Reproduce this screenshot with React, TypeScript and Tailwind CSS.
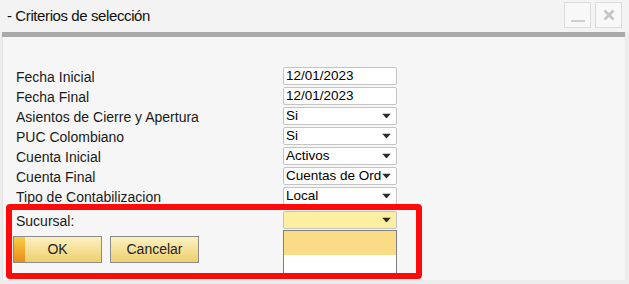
import React from 'react';

const font = { fontFamily: '"Liberation Sans", Arial, sans-serif' };

function Arrow() {
    return (
        <svg width="9" height="5" viewBox="0 0 9 5" className="absolute right-[5px] top-1/2 -translate-y-1/2">
            <path d="M0 0 H9 L4.5 5 Z" fill="#2b2b2b" />
        </svg>
    );
}

function Field({ value, select, active }: { value: string; select?: boolean; active?: boolean }) {
    return (
        <div
            className={`relative h-[18px] w-[114px] rounded-[2px] border border-[#c4c4c4] pl-[2px] text-[13.5px] leading-[16px] text-black whitespace-nowrap ${active ? 'bg-[#fdefa2]' : 'bg-white'}`}
        >
            <span className="block">{value}</span>
            {select && <Arrow />}
        </div>
    );
}

// the control shows the value cut to what fits before the arrow
const rows: { label: string; value: string; select?: boolean }[] = [
    { label: 'Fecha Inicial', value: '12/01/2023' },
    { label: 'Fecha Final', value: '12/01/2023' },
    { label: 'Asientos de Cierre y Apertura', value: 'Si', select: true },
    { label: 'PUC Colombiano', value: 'Si', select: true },
    { label: 'Cuenta Inicial', value: 'Activos', select: true },
    { label: 'Cuenta Final', value: 'Cuentas de Ord', select: true },
    { label: 'Tipo de Contabilizacion', value: 'Local', select: true },
];

export default function App() {
    return (
        <div className="relative w-[629px] h-[284px] overflow-hidden bg-[#ededed]" style={font}>
            {/* title bar */}
            <div className="flex h-[32px] items-center justify-between bg-[#f3f3f3] pl-[7px] pr-[7px]">
                <span className="text-[15px] tracking-[-0.4px] text-[#111] mt-[1px]">- Criterios de selección</span>
                <div className="flex gap-[4px] -mt-[3px]">
                    <div className="flex h-[26px] w-[27px] items-end justify-center border border-[#dcdcdc] bg-[#f8f8f8] pb-[5px]">
                        <div className="h-[2px] w-[14px] bg-[#cfcfcf]" />
                    </div>
                    <div className="flex h-[26px] w-[27px] items-center justify-center border border-[#dcdcdc] bg-[#f8f8f8]">
                        <svg width="12" height="12" viewBox="0 0 12 12">
                            <path d="M1.5 1.5 L10.5 10.5 M10.5 1.5 L1.5 10.5" stroke="#c4c4c4" strokeWidth="2.5" />
                        </svg>
                    </div>
                </div>
            </div>

            {/* separator bar */}
            <div className="ml-[2px] h-[5px] w-[623px] bg-[#a9a9a9]" />

            {/* form panel */}
            <div className="ml-[2px] h-[243px] w-[623px] border-l border-[#e3e3e3] bg-[#f6f6f6] pl-[13px] pt-[30px] text-[14px] text-[#1a1a1a]">
                <div className="flex flex-col gap-[2px]">
                    {rows.map((r) => (
                        <div key={r.label} className="flex h-[18px] items-center">
                            <div className="w-[267px] leading-[18px] pt-[2px]">{r.label}</div>
                            <Field value={r.value} select={r.select} />
                        </div>
                    ))}
                </div>

                <div className="mt-[5px] flex h-[19px] items-center">
                    <div className="w-[267px] leading-[18px] pt-[2px]">Sucursal:</div>
                    <div className="relative">
                        <Field value="" select active />
                        {/* open dropdown list */}
                        <div className="absolute left-0 top-[19px] z-10 w-[114px] border border-[#7f7f7f] bg-white">
                            <div className="h-[24px] bg-[#fbdc86]" />
                            <div className="h-[18px] bg-white" />
                        </div>
                    </div>
                </div>

                <div className="mt-[7px] -ml-[3px] flex gap-[8px]">
                    <button className="relative flex h-[27px] w-[89px] items-center justify-center overflow-hidden border border-[#8c8c8c] bg-gradient-to-b from-[#fcf1c0] to-[#f0cf6c] text-[14px] text-[#222]">
                        <span className="absolute left-0 top-0 h-full w-[11px] bg-gradient-to-b from-[#f8cc45] to-[#e98d18]" />
                        <span className="relative">OK</span>
                    </button>
                    <button className="flex h-[27px] w-[89px] items-center justify-center border border-[#8c8c8c] bg-gradient-to-b from-[#fcf1c0] to-[#f0cf6c] text-[14px] text-[#222]">
                        Cancelar
                    </button>
                </div>
            </div>

            {/* red highlight annotation */}
            <div className="pointer-events-none absolute left-[6px] top-[204px] z-20 h-[75px] w-[416px] rounded-[4px] border-[6px] border-[#ff0a0a]" />
        </div>
    );
}
